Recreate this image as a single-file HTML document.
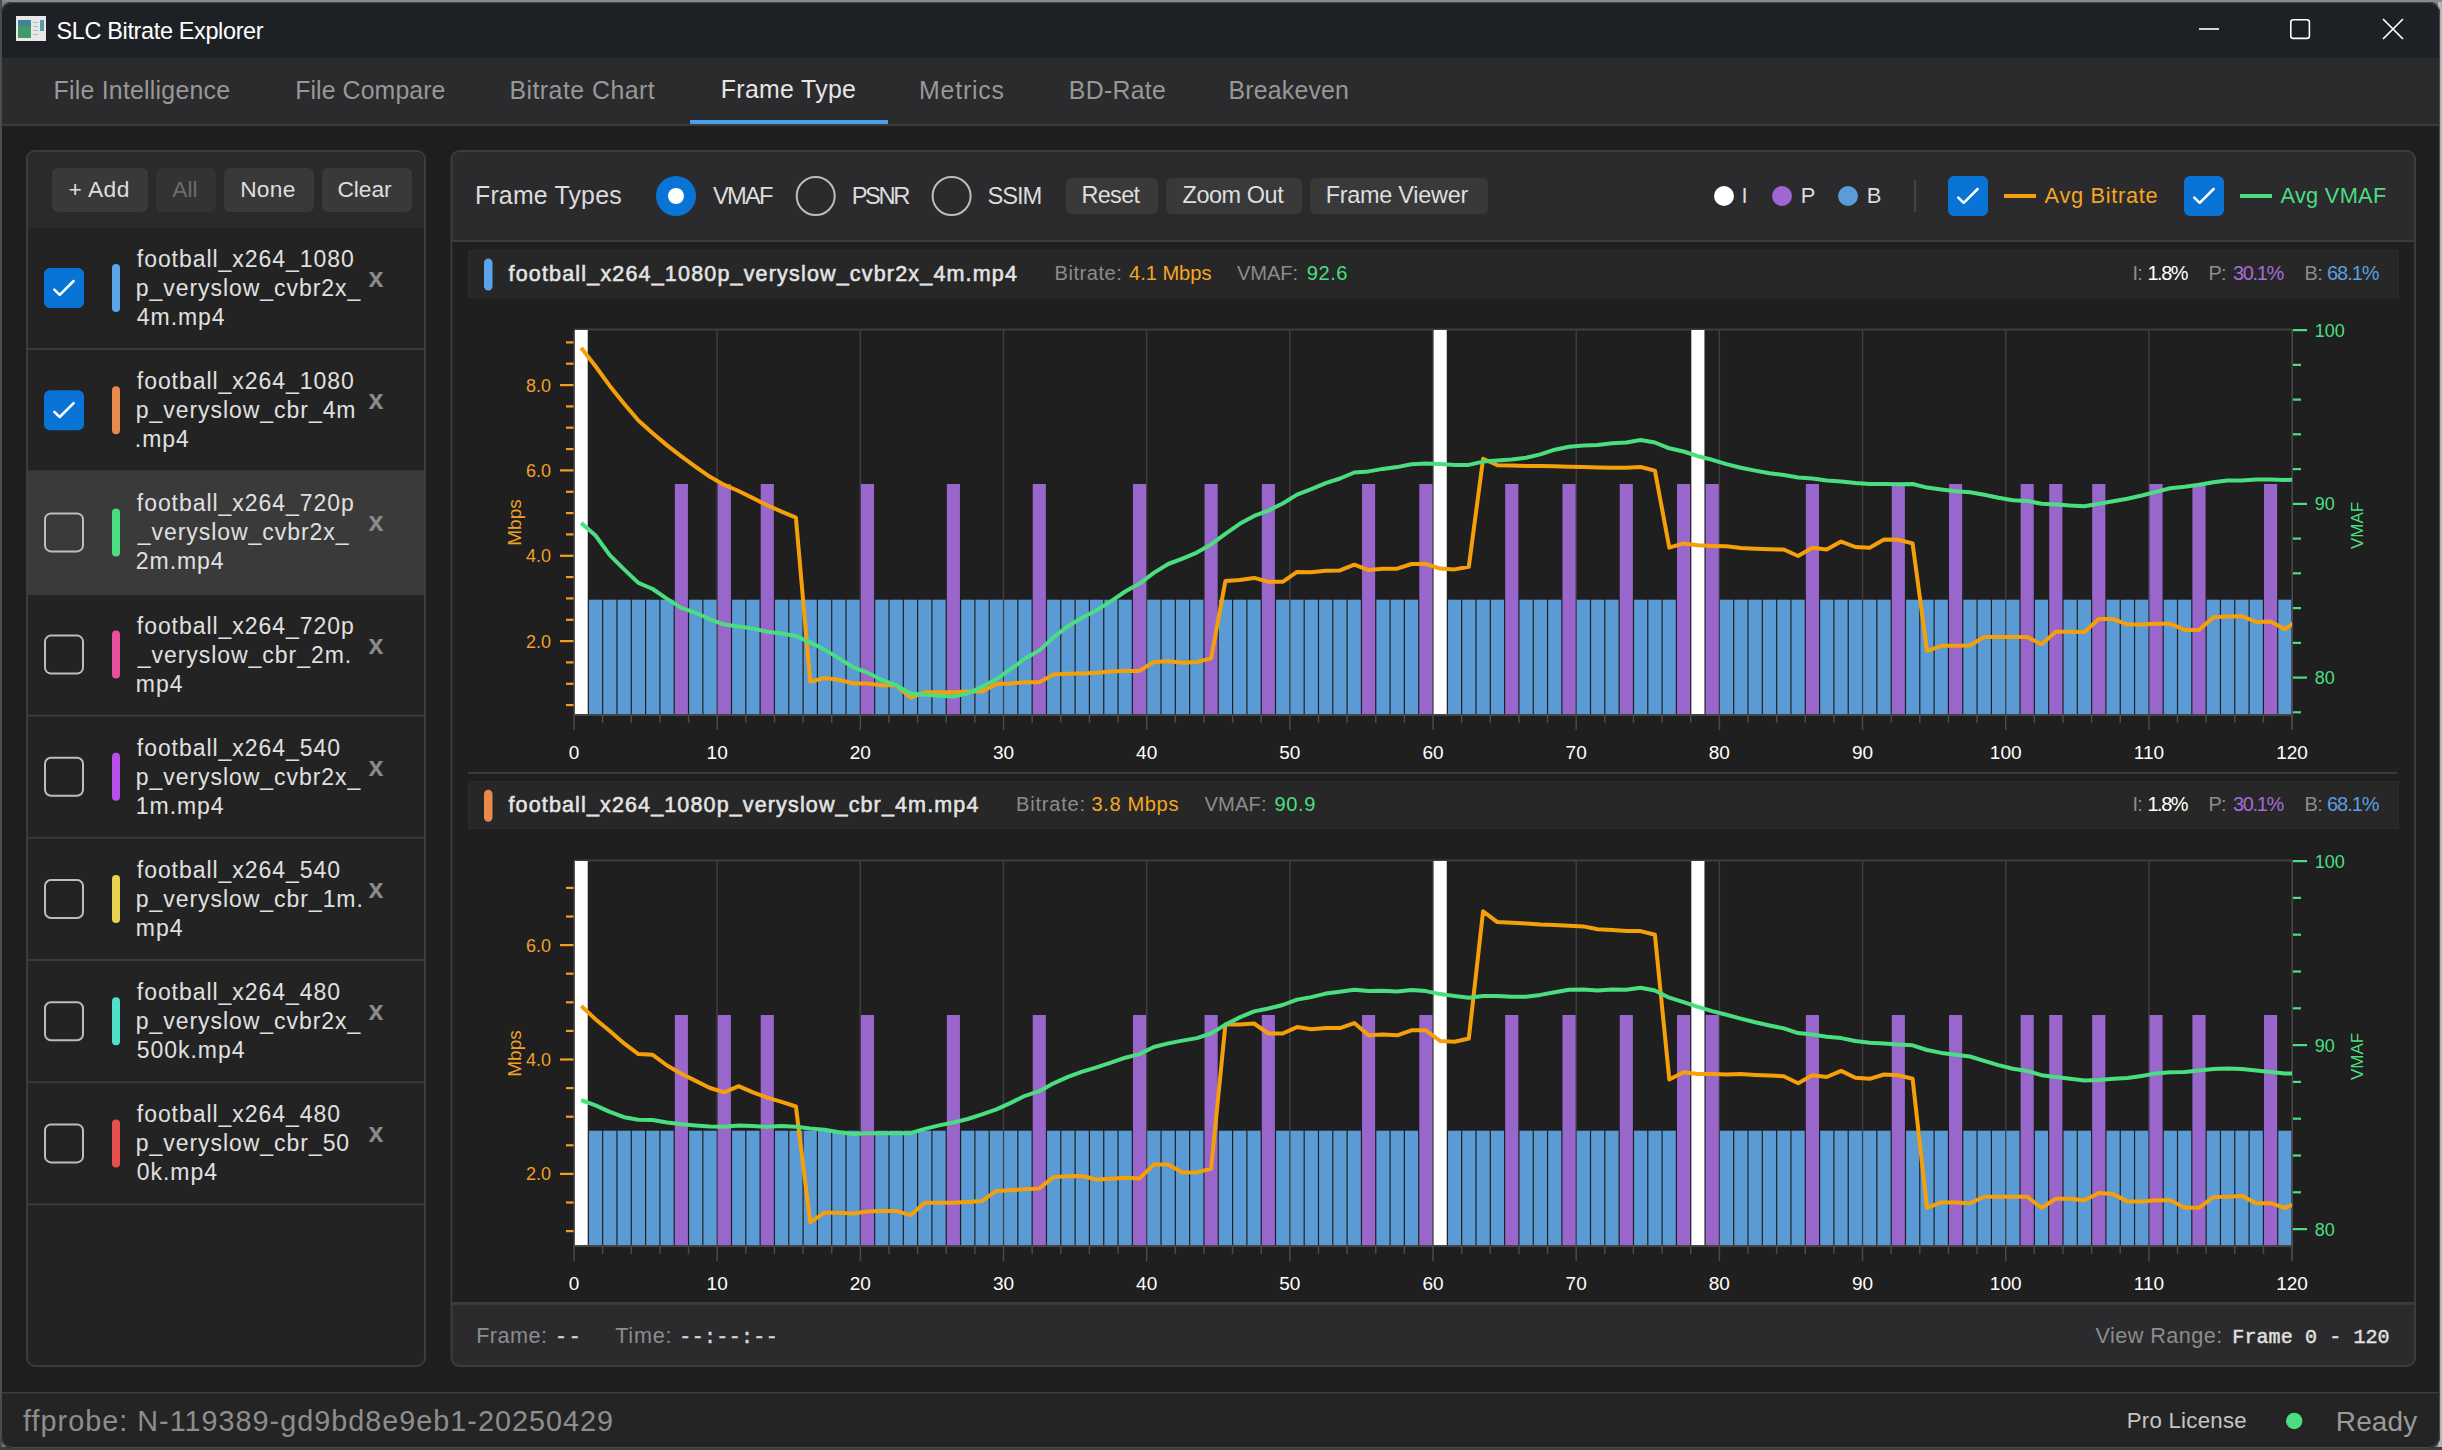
<!DOCTYPE html><html><head><meta charset="utf-8"><title>SLC Bitrate Explorer</title><style>html,body{margin:0;padding:0;background:#9c9c9c;overflow:hidden;width:2442px;height:1450px}svg{display:block}svg{font-family:"Liberation Sans",sans-serif}</style></head><body>
<svg width="2442" height="1450" viewBox="0 0 2442 1450">
<defs><clipPath id="winclip"><rect x="1" y="2" width="2439" height="1446" rx="11"/></clipPath><clipPath id="p1"><rect x="574" y="330" width="1718" height="384"/></clipPath><clipPath id="p2"><rect x="574" y="861" width="1718" height="384"/></clipPath></defs>
<rect x="0" y="0" width="2442" height="1450" fill="#7a7a7a"/><rect x="2438" y="0" width="4" height="1450" fill="#b5b5b5"/><rect x="0" y="0" width="2442" height="2" fill="#8a8a8a"/>
<rect x="0" y="0" width="2" height="1450" fill="#4a4d52"/><rect x="0" y="1447" width="2442" height="3" fill="#3c3c3c"/>
<g clip-path="url(#winclip)">
<rect x="0" y="0" width="2442" height="1450" fill="#1e1e1e"/>
<rect x="0" y="0" width="2442" height="58" fill="#1d2025"/>
<rect x="0" y="58" width="2442" height="67" fill="#2b2b2d"/>
<rect x="0" y="124" width="2442" height="2" fill="#3b3b3b"/>
<rect x="690" y="120" width="198" height="4" fill="#4a9eea"/>
<rect x="0" y="1392.5" width="2442" height="60" fill="#242424"/>
<rect x="0" y="1392" width="2442" height="1.5" fill="#3c3c3c"/>
</g>
<rect x="1.5" y="2.5" width="2438" height="1445" rx="11" fill="none" stroke="#4a4a4a" stroke-width="1"/>
<rect x="16" y="16" width="30" height="25" fill="#e8e8e8"/><rect x="18" y="20" width="13" height="18" fill="#3f9a6a"/><rect x="18" y="20" width="13" height="6" fill="#3d7fa0" opacity="0.8"/><rect x="40" y="20" width="4" height="11" fill="#5a9aa8"/><rect x="33" y="22" width="5" height="1" fill="#bbb"/><rect x="33" y="26" width="5" height="1" fill="#bbb"/><rect x="33" y="30" width="5" height="1" fill="#bbb"/><rect x="33" y="34" width="5" height="1" fill="#bbb"/>
<rect x="2199" y="28.2" width="20" height="1.6" fill="#ffffff"/>
<rect x="2290.8" y="19.8" width="18.6" height="18.6" rx="2.5" fill="none" stroke="#ffffff" stroke-width="1.6"/>
<path d="M2383 19 L2403 39 M2403 19 L2383 39" stroke="#ffffff" stroke-width="1.7" fill="none"/>
<rect x="27" y="151" width="398" height="1215" rx="8" fill="#232323" stroke="#3c3c3c" stroke-width="2"/>
<path d="M28 228 V159 a7 7 0 0 1 7 -7 H417 a7 7 0 0 1 7 7 V228 Z" fill="#2a2a2a"/>
<rect x="52" y="168" width="96" height="44" rx="6" fill="#393939"/>
<rect x="156" y="168" width="60" height="44" rx="6" fill="#333333"/>
<rect x="224" y="168" width="90" height="44" rx="6" fill="#393939"/>
<rect x="322" y="168" width="90" height="44" rx="6" fill="#393939"/>
<rect x="28" y="348.0" width="396" height="2" fill="#3a3a3a"/>
<rect x="44" y="268.0" width="40" height="40" rx="6" fill="#0a74d6"/>
<path d="M54.3 289.6 L59.7 294.8 L73.6 281.0" stroke="#ffffff" stroke-width="2.5" fill="none" stroke-linecap="round" stroke-linejoin="round"/>
<rect x="112" y="264.0" width="8" height="48" rx="4" fill="#5aa5ea"/>
<text x="368.5" y="287.0" font-size="27" font-weight="700" fill="#8a8a8a">x</text>
<rect x="28" y="470.2" width="396" height="2" fill="#3a3a3a"/>
<rect x="44" y="390.2" width="40" height="40" rx="6" fill="#0a74d6"/>
<path d="M54.3 411.8 L59.7 417.0 L73.6 403.2" stroke="#ffffff" stroke-width="2.5" fill="none" stroke-linecap="round" stroke-linejoin="round"/>
<rect x="112" y="386.2" width="8" height="48" rx="4" fill="#e8894e"/>
<text x="368.5" y="409.2" font-size="27" font-weight="700" fill="#8a8a8a">x</text>
<rect x="28" y="471.9" width="396" height="123.0" fill="#3a3a3a"/>
<rect x="28" y="592.4" width="396" height="2" fill="#3a3a3a"/>
<rect x="45" y="513.4" width="38" height="38" rx="6" fill="none" stroke="#bdbdbd" stroke-width="2"/>
<rect x="112" y="508.4" width="8" height="48" rx="4" fill="#4ade80"/>
<text x="368.5" y="531.4" font-size="27" font-weight="700" fill="#8a8a8a">x</text>
<rect x="28" y="714.6" width="396" height="2" fill="#3a3a3a"/>
<rect x="45" y="635.6" width="38" height="38" rx="6" fill="none" stroke="#bdbdbd" stroke-width="2"/>
<rect x="112" y="630.6" width="8" height="48" rx="4" fill="#e84f9c"/>
<text x="368.5" y="653.6" font-size="27" font-weight="700" fill="#8a8a8a">x</text>
<rect x="28" y="836.8" width="396" height="2" fill="#3a3a3a"/>
<rect x="45" y="757.8" width="38" height="38" rx="6" fill="none" stroke="#bdbdbd" stroke-width="2"/>
<rect x="112" y="752.8" width="8" height="48" rx="4" fill="#b84fe8"/>
<text x="368.5" y="775.8" font-size="27" font-weight="700" fill="#8a8a8a">x</text>
<rect x="28" y="959.0" width="396" height="2" fill="#3a3a3a"/>
<rect x="45" y="880.0" width="38" height="38" rx="6" fill="none" stroke="#bdbdbd" stroke-width="2"/>
<rect x="112" y="875.0" width="8" height="48" rx="4" fill="#e8d24f"/>
<text x="368.5" y="898.0" font-size="27" font-weight="700" fill="#8a8a8a">x</text>
<rect x="28" y="1081.2" width="396" height="2" fill="#3a3a3a"/>
<rect x="45" y="1002.2" width="38" height="38" rx="6" fill="none" stroke="#bdbdbd" stroke-width="2"/>
<rect x="112" y="997.2" width="8" height="48" rx="4" fill="#4fe0c8"/>
<text x="368.5" y="1020.2" font-size="27" font-weight="700" fill="#8a8a8a">x</text>
<rect x="28" y="1203.4" width="396" height="2" fill="#3a3a3a"/>
<rect x="45" y="1124.4" width="38" height="38" rx="6" fill="none" stroke="#bdbdbd" stroke-width="2"/>
<rect x="112" y="1119.4" width="8" height="48" rx="4" fill="#e84f4f"/>
<text x="368.5" y="1142.4" font-size="27" font-weight="700" fill="#8a8a8a">x</text>
<rect x="451.5" y="151" width="1963.5" height="1215" rx="8" fill="#2b2b2d" stroke="#3c3c3c" stroke-width="2"/>
<rect x="452.5" y="240" width="1961.5" height="2" fill="#3a3a3a"/>
<rect x="452.5" y="242" width="1961.5" height="1060" fill="#1f1f1f"/>
<rect x="452.5" y="1302" width="1961.5" height="3" fill="#3a3a3a"/>
<circle cx="676" cy="196" r="20" fill="#0a74d6"/><circle cx="676" cy="196" r="8" fill="#ffffff"/>
<circle cx="815.7" cy="196" r="19" fill="none" stroke="#bdbdbd" stroke-width="2"/>
<circle cx="951.6" cy="196" r="19" fill="none" stroke="#bdbdbd" stroke-width="2"/>
<rect x="1066" y="178" width="92" height="36" rx="6" fill="#393939"/>
<rect x="1166" y="178" width="136" height="36" rx="6" fill="#393939"/>
<rect x="1310" y="178" width="178" height="36" rx="6" fill="#393939"/>
<circle cx="1724" cy="196" r="10" fill="#ffffff"/><circle cx="1782" cy="196" r="10" fill="#a066d3"/><circle cx="1848" cy="196" r="10" fill="#5b9bd8"/>
<rect x="1914" y="180" width="2" height="32" fill="#444444"/>
<rect x="1948" y="176" width="40" height="40" rx="6" fill="#0a74d6"/>
<path d="M1958.3 197.6 L1963.7 202.8 L1977.6 189.0" stroke="#ffffff" stroke-width="2.5" fill="none" stroke-linecap="round" stroke-linejoin="round"/>
<rect x="2184" y="176" width="40" height="40" rx="6" fill="#0a74d6"/>
<path d="M2194.3 197.6 L2199.7 202.8 L2213.6 189.0" stroke="#ffffff" stroke-width="2.5" fill="none" stroke-linecap="round" stroke-linejoin="round"/>
<rect x="2004" y="194" width="32" height="4" fill="#f5a00b"/>
<rect x="2240" y="194" width="32" height="4" fill="#4ade80"/>
<rect x="468.5" y="250.5" width="1930" height="47" fill="#272727" stroke="#2b2b2b" stroke-width="1"/>
<rect x="484" y="258.5" width="8.5" height="32" rx="4.2" fill="#5aa5ea"/>
<rect x="468" y="772" width="1929" height="2" fill="#3a3a3a"/>
<rect x="468.5" y="781.5" width="1930" height="47" fill="#272727" stroke="#2b2b2b" stroke-width="1"/>
<rect x="484" y="789.7" width="8.5" height="32" rx="4.2" fill="#e8894e"/>
<rect x="716.42" y="330" width="1.5" height="384" fill="#3e3e3e"/>
<rect x="859.59" y="330" width="1.5" height="384" fill="#3e3e3e"/>
<rect x="1002.76" y="330" width="1.5" height="384" fill="#3e3e3e"/>
<rect x="1145.93" y="330" width="1.5" height="384" fill="#3e3e3e"/>
<rect x="1289.10" y="330" width="1.5" height="384" fill="#3e3e3e"/>
<rect x="1432.27" y="330" width="1.5" height="384" fill="#3e3e3e"/>
<rect x="1575.44" y="330" width="1.5" height="384" fill="#3e3e3e"/>
<rect x="1718.61" y="330" width="1.5" height="384" fill="#3e3e3e"/>
<rect x="1861.78" y="330" width="1.5" height="384" fill="#3e3e3e"/>
<rect x="2004.95" y="330" width="1.5" height="384" fill="#3e3e3e"/>
<rect x="2148.12" y="330" width="1.5" height="384" fill="#3e3e3e"/>
<rect x="574" y="328.5" width="1718" height="2" fill="#3e3e3e"/>
<rect x="574.60" y="330.0" width="13.12" height="384.0" fill="#ffffff"/>
<rect x="588.92" y="599.7" width="13.12" height="114.3" fill="#5b9bd5"/>
<rect x="603.23" y="599.7" width="13.12" height="114.3" fill="#5b9bd5"/>
<rect x="617.55" y="599.7" width="13.12" height="114.3" fill="#5b9bd5"/>
<rect x="631.87" y="599.7" width="13.12" height="114.3" fill="#5b9bd5"/>
<rect x="646.19" y="599.7" width="13.12" height="114.3" fill="#5b9bd5"/>
<rect x="660.50" y="599.7" width="13.12" height="114.3" fill="#5b9bd5"/>
<rect x="674.82" y="484.0" width="13.12" height="230.0" fill="#9966cc"/>
<rect x="689.14" y="599.7" width="13.12" height="114.3" fill="#5b9bd5"/>
<rect x="703.45" y="599.7" width="13.12" height="114.3" fill="#5b9bd5"/>
<rect x="717.77" y="484.0" width="13.12" height="230.0" fill="#9966cc"/>
<rect x="732.09" y="599.7" width="13.12" height="114.3" fill="#5b9bd5"/>
<rect x="746.40" y="599.7" width="13.12" height="114.3" fill="#5b9bd5"/>
<rect x="760.72" y="484.0" width="13.12" height="230.0" fill="#9966cc"/>
<rect x="775.04" y="599.7" width="13.12" height="114.3" fill="#5b9bd5"/>
<rect x="789.36" y="599.7" width="13.12" height="114.3" fill="#5b9bd5"/>
<rect x="803.67" y="599.7" width="13.12" height="114.3" fill="#5b9bd5"/>
<rect x="817.99" y="599.7" width="13.12" height="114.3" fill="#5b9bd5"/>
<rect x="832.31" y="599.7" width="13.12" height="114.3" fill="#5b9bd5"/>
<rect x="846.62" y="599.7" width="13.12" height="114.3" fill="#5b9bd5"/>
<rect x="860.94" y="484.0" width="13.12" height="230.0" fill="#9966cc"/>
<rect x="875.26" y="599.7" width="13.12" height="114.3" fill="#5b9bd5"/>
<rect x="889.57" y="599.7" width="13.12" height="114.3" fill="#5b9bd5"/>
<rect x="903.89" y="599.7" width="13.12" height="114.3" fill="#5b9bd5"/>
<rect x="918.21" y="599.7" width="13.12" height="114.3" fill="#5b9bd5"/>
<rect x="932.52" y="599.7" width="13.12" height="114.3" fill="#5b9bd5"/>
<rect x="946.84" y="484.0" width="13.12" height="230.0" fill="#9966cc"/>
<rect x="961.16" y="599.7" width="13.12" height="114.3" fill="#5b9bd5"/>
<rect x="975.48" y="599.7" width="13.12" height="114.3" fill="#5b9bd5"/>
<rect x="989.79" y="599.7" width="13.12" height="114.3" fill="#5b9bd5"/>
<rect x="1004.11" y="599.7" width="13.12" height="114.3" fill="#5b9bd5"/>
<rect x="1018.43" y="599.7" width="13.12" height="114.3" fill="#5b9bd5"/>
<rect x="1032.74" y="484.0" width="13.12" height="230.0" fill="#9966cc"/>
<rect x="1047.06" y="599.7" width="13.12" height="114.3" fill="#5b9bd5"/>
<rect x="1061.38" y="599.7" width="13.12" height="114.3" fill="#5b9bd5"/>
<rect x="1075.69" y="599.7" width="13.12" height="114.3" fill="#5b9bd5"/>
<rect x="1090.01" y="599.7" width="13.12" height="114.3" fill="#5b9bd5"/>
<rect x="1104.33" y="599.7" width="13.12" height="114.3" fill="#5b9bd5"/>
<rect x="1118.65" y="599.7" width="13.12" height="114.3" fill="#5b9bd5"/>
<rect x="1132.96" y="484.0" width="13.12" height="230.0" fill="#9966cc"/>
<rect x="1147.28" y="599.7" width="13.12" height="114.3" fill="#5b9bd5"/>
<rect x="1161.60" y="599.7" width="13.12" height="114.3" fill="#5b9bd5"/>
<rect x="1175.91" y="599.7" width="13.12" height="114.3" fill="#5b9bd5"/>
<rect x="1190.23" y="599.7" width="13.12" height="114.3" fill="#5b9bd5"/>
<rect x="1204.55" y="484.0" width="13.12" height="230.0" fill="#9966cc"/>
<rect x="1218.86" y="599.7" width="13.12" height="114.3" fill="#5b9bd5"/>
<rect x="1233.18" y="599.7" width="13.12" height="114.3" fill="#5b9bd5"/>
<rect x="1247.50" y="599.7" width="13.12" height="114.3" fill="#5b9bd5"/>
<rect x="1261.82" y="484.0" width="13.12" height="230.0" fill="#9966cc"/>
<rect x="1276.13" y="599.7" width="13.12" height="114.3" fill="#5b9bd5"/>
<rect x="1290.45" y="599.7" width="13.12" height="114.3" fill="#5b9bd5"/>
<rect x="1304.77" y="599.7" width="13.12" height="114.3" fill="#5b9bd5"/>
<rect x="1319.08" y="599.7" width="13.12" height="114.3" fill="#5b9bd5"/>
<rect x="1333.40" y="599.7" width="13.12" height="114.3" fill="#5b9bd5"/>
<rect x="1347.72" y="599.7" width="13.12" height="114.3" fill="#5b9bd5"/>
<rect x="1362.03" y="484.0" width="13.12" height="230.0" fill="#9966cc"/>
<rect x="1376.35" y="599.7" width="13.12" height="114.3" fill="#5b9bd5"/>
<rect x="1390.67" y="599.7" width="13.12" height="114.3" fill="#5b9bd5"/>
<rect x="1404.99" y="599.7" width="13.12" height="114.3" fill="#5b9bd5"/>
<rect x="1419.30" y="484.0" width="13.12" height="230.0" fill="#9966cc"/>
<rect x="1433.62" y="330.0" width="13.12" height="384.0" fill="#ffffff"/>
<rect x="1447.94" y="599.7" width="13.12" height="114.3" fill="#5b9bd5"/>
<rect x="1462.25" y="599.7" width="13.12" height="114.3" fill="#5b9bd5"/>
<rect x="1476.57" y="599.7" width="13.12" height="114.3" fill="#5b9bd5"/>
<rect x="1490.89" y="599.7" width="13.12" height="114.3" fill="#5b9bd5"/>
<rect x="1505.20" y="484.0" width="13.12" height="230.0" fill="#9966cc"/>
<rect x="1519.52" y="599.7" width="13.12" height="114.3" fill="#5b9bd5"/>
<rect x="1533.84" y="599.7" width="13.12" height="114.3" fill="#5b9bd5"/>
<rect x="1548.16" y="599.7" width="13.12" height="114.3" fill="#5b9bd5"/>
<rect x="1562.47" y="484.0" width="13.12" height="230.0" fill="#9966cc"/>
<rect x="1576.79" y="599.7" width="13.12" height="114.3" fill="#5b9bd5"/>
<rect x="1591.11" y="599.7" width="13.12" height="114.3" fill="#5b9bd5"/>
<rect x="1605.42" y="599.7" width="13.12" height="114.3" fill="#5b9bd5"/>
<rect x="1619.74" y="484.0" width="13.12" height="230.0" fill="#9966cc"/>
<rect x="1634.06" y="599.7" width="13.12" height="114.3" fill="#5b9bd5"/>
<rect x="1648.38" y="599.7" width="13.12" height="114.3" fill="#5b9bd5"/>
<rect x="1662.69" y="599.7" width="13.12" height="114.3" fill="#5b9bd5"/>
<rect x="1677.01" y="484.0" width="13.12" height="230.0" fill="#9966cc"/>
<rect x="1691.33" y="330.0" width="13.12" height="384.0" fill="#ffffff"/>
<rect x="1705.64" y="484.0" width="13.12" height="230.0" fill="#9966cc"/>
<rect x="1719.96" y="599.7" width="13.12" height="114.3" fill="#5b9bd5"/>
<rect x="1734.28" y="599.7" width="13.12" height="114.3" fill="#5b9bd5"/>
<rect x="1748.59" y="599.7" width="13.12" height="114.3" fill="#5b9bd5"/>
<rect x="1762.91" y="599.7" width="13.12" height="114.3" fill="#5b9bd5"/>
<rect x="1777.23" y="599.7" width="13.12" height="114.3" fill="#5b9bd5"/>
<rect x="1791.54" y="599.7" width="13.12" height="114.3" fill="#5b9bd5"/>
<rect x="1805.86" y="484.0" width="13.12" height="230.0" fill="#9966cc"/>
<rect x="1820.18" y="599.7" width="13.12" height="114.3" fill="#5b9bd5"/>
<rect x="1834.50" y="599.7" width="13.12" height="114.3" fill="#5b9bd5"/>
<rect x="1848.81" y="599.7" width="13.12" height="114.3" fill="#5b9bd5"/>
<rect x="1863.13" y="599.7" width="13.12" height="114.3" fill="#5b9bd5"/>
<rect x="1877.45" y="599.7" width="13.12" height="114.3" fill="#5b9bd5"/>
<rect x="1891.76" y="484.0" width="13.12" height="230.0" fill="#9966cc"/>
<rect x="1906.08" y="599.7" width="13.12" height="114.3" fill="#5b9bd5"/>
<rect x="1920.40" y="599.7" width="13.12" height="114.3" fill="#5b9bd5"/>
<rect x="1934.71" y="599.7" width="13.12" height="114.3" fill="#5b9bd5"/>
<rect x="1949.03" y="484.0" width="13.12" height="230.0" fill="#9966cc"/>
<rect x="1963.35" y="599.7" width="13.12" height="114.3" fill="#5b9bd5"/>
<rect x="1977.67" y="599.7" width="13.12" height="114.3" fill="#5b9bd5"/>
<rect x="1991.98" y="599.7" width="13.12" height="114.3" fill="#5b9bd5"/>
<rect x="2006.30" y="599.7" width="13.12" height="114.3" fill="#5b9bd5"/>
<rect x="2020.62" y="484.0" width="13.12" height="230.0" fill="#9966cc"/>
<rect x="2034.93" y="599.7" width="13.12" height="114.3" fill="#5b9bd5"/>
<rect x="2049.25" y="484.0" width="13.12" height="230.0" fill="#9966cc"/>
<rect x="2063.57" y="599.7" width="13.12" height="114.3" fill="#5b9bd5"/>
<rect x="2077.88" y="599.7" width="13.12" height="114.3" fill="#5b9bd5"/>
<rect x="2092.20" y="484.0" width="13.12" height="230.0" fill="#9966cc"/>
<rect x="2106.52" y="599.7" width="13.12" height="114.3" fill="#5b9bd5"/>
<rect x="2120.84" y="599.7" width="13.12" height="114.3" fill="#5b9bd5"/>
<rect x="2135.15" y="599.7" width="13.12" height="114.3" fill="#5b9bd5"/>
<rect x="2149.47" y="484.0" width="13.12" height="230.0" fill="#9966cc"/>
<rect x="2163.79" y="599.7" width="13.12" height="114.3" fill="#5b9bd5"/>
<rect x="2178.10" y="599.7" width="13.12" height="114.3" fill="#5b9bd5"/>
<rect x="2192.42" y="484.0" width="13.12" height="230.0" fill="#9966cc"/>
<rect x="2206.74" y="599.7" width="13.12" height="114.3" fill="#5b9bd5"/>
<rect x="2221.05" y="599.7" width="13.12" height="114.3" fill="#5b9bd5"/>
<rect x="2235.37" y="599.7" width="13.12" height="114.3" fill="#5b9bd5"/>
<rect x="2249.69" y="599.7" width="13.12" height="114.3" fill="#5b9bd5"/>
<rect x="2264.01" y="484.0" width="13.12" height="230.0" fill="#9966cc"/>
<rect x="2278.32" y="599.7" width="13.12" height="114.3" fill="#5b9bd5"/>
<rect x="573.5" y="330" width="1.2" height="384" fill="#444"/>
<rect x="2291.5" y="329" width="1.5" height="400" fill="#4a4a4a"/>
<rect x="573" y="714" width="1720" height="2" fill="#444"/>
<rect x="573.25" y="715" width="1.5" height="15" fill="#4a4a4a"/>
<rect x="601.88" y="715" width="1.5" height="8" fill="#4a4a4a"/>
<rect x="630.52" y="715" width="1.5" height="8" fill="#4a4a4a"/>
<rect x="659.15" y="715" width="1.5" height="8" fill="#4a4a4a"/>
<rect x="687.79" y="715" width="1.5" height="8" fill="#4a4a4a"/>
<rect x="716.42" y="715" width="1.5" height="15" fill="#4a4a4a"/>
<rect x="745.05" y="715" width="1.5" height="8" fill="#4a4a4a"/>
<rect x="773.69" y="715" width="1.5" height="8" fill="#4a4a4a"/>
<rect x="802.32" y="715" width="1.5" height="8" fill="#4a4a4a"/>
<rect x="830.96" y="715" width="1.5" height="8" fill="#4a4a4a"/>
<rect x="859.59" y="715" width="1.5" height="15" fill="#4a4a4a"/>
<rect x="888.22" y="715" width="1.5" height="8" fill="#4a4a4a"/>
<rect x="916.86" y="715" width="1.5" height="8" fill="#4a4a4a"/>
<rect x="945.49" y="715" width="1.5" height="8" fill="#4a4a4a"/>
<rect x="974.13" y="715" width="1.5" height="8" fill="#4a4a4a"/>
<rect x="1002.76" y="715" width="1.5" height="15" fill="#4a4a4a"/>
<rect x="1031.39" y="715" width="1.5" height="8" fill="#4a4a4a"/>
<rect x="1060.03" y="715" width="1.5" height="8" fill="#4a4a4a"/>
<rect x="1088.66" y="715" width="1.5" height="8" fill="#4a4a4a"/>
<rect x="1117.30" y="715" width="1.5" height="8" fill="#4a4a4a"/>
<rect x="1145.93" y="715" width="1.5" height="15" fill="#4a4a4a"/>
<rect x="1174.56" y="715" width="1.5" height="8" fill="#4a4a4a"/>
<rect x="1203.20" y="715" width="1.5" height="8" fill="#4a4a4a"/>
<rect x="1231.83" y="715" width="1.5" height="8" fill="#4a4a4a"/>
<rect x="1260.47" y="715" width="1.5" height="8" fill="#4a4a4a"/>
<rect x="1289.10" y="715" width="1.5" height="15" fill="#4a4a4a"/>
<rect x="1317.73" y="715" width="1.5" height="8" fill="#4a4a4a"/>
<rect x="1346.37" y="715" width="1.5" height="8" fill="#4a4a4a"/>
<rect x="1375.00" y="715" width="1.5" height="8" fill="#4a4a4a"/>
<rect x="1403.64" y="715" width="1.5" height="8" fill="#4a4a4a"/>
<rect x="1432.27" y="715" width="1.5" height="15" fill="#4a4a4a"/>
<rect x="1460.90" y="715" width="1.5" height="8" fill="#4a4a4a"/>
<rect x="1489.54" y="715" width="1.5" height="8" fill="#4a4a4a"/>
<rect x="1518.17" y="715" width="1.5" height="8" fill="#4a4a4a"/>
<rect x="1546.81" y="715" width="1.5" height="8" fill="#4a4a4a"/>
<rect x="1575.44" y="715" width="1.5" height="15" fill="#4a4a4a"/>
<rect x="1604.07" y="715" width="1.5" height="8" fill="#4a4a4a"/>
<rect x="1632.71" y="715" width="1.5" height="8" fill="#4a4a4a"/>
<rect x="1661.34" y="715" width="1.5" height="8" fill="#4a4a4a"/>
<rect x="1689.98" y="715" width="1.5" height="8" fill="#4a4a4a"/>
<rect x="1718.61" y="715" width="1.5" height="15" fill="#4a4a4a"/>
<rect x="1747.24" y="715" width="1.5" height="8" fill="#4a4a4a"/>
<rect x="1775.88" y="715" width="1.5" height="8" fill="#4a4a4a"/>
<rect x="1804.51" y="715" width="1.5" height="8" fill="#4a4a4a"/>
<rect x="1833.15" y="715" width="1.5" height="8" fill="#4a4a4a"/>
<rect x="1861.78" y="715" width="1.5" height="15" fill="#4a4a4a"/>
<rect x="1890.41" y="715" width="1.5" height="8" fill="#4a4a4a"/>
<rect x="1919.05" y="715" width="1.5" height="8" fill="#4a4a4a"/>
<rect x="1947.68" y="715" width="1.5" height="8" fill="#4a4a4a"/>
<rect x="1976.32" y="715" width="1.5" height="8" fill="#4a4a4a"/>
<rect x="2004.95" y="715" width="1.5" height="15" fill="#4a4a4a"/>
<rect x="2033.58" y="715" width="1.5" height="8" fill="#4a4a4a"/>
<rect x="2062.22" y="715" width="1.5" height="8" fill="#4a4a4a"/>
<rect x="2090.85" y="715" width="1.5" height="8" fill="#4a4a4a"/>
<rect x="2119.49" y="715" width="1.5" height="8" fill="#4a4a4a"/>
<rect x="2148.12" y="715" width="1.5" height="15" fill="#4a4a4a"/>
<rect x="2176.75" y="715" width="1.5" height="8" fill="#4a4a4a"/>
<rect x="2205.39" y="715" width="1.5" height="8" fill="#4a4a4a"/>
<rect x="2234.02" y="715" width="1.5" height="8" fill="#4a4a4a"/>
<rect x="2262.66" y="715" width="1.5" height="8" fill="#4a4a4a"/>
<rect x="2291.29" y="715" width="1.5" height="15" fill="#4a4a4a"/>
<rect x="566" y="704.0" width="7.5" height="2.2" fill="#f0a028"/>
<rect x="566" y="682.7" width="7.5" height="2.2" fill="#f0a028"/>
<rect x="566" y="661.3" width="7.5" height="2.2" fill="#f0a028"/>
<rect x="560" y="640.0" width="13.5" height="2.2" fill="#f0a028"/>
<rect x="566" y="618.7" width="7.5" height="2.2" fill="#f0a028"/>
<rect x="566" y="597.3" width="7.5" height="2.2" fill="#f0a028"/>
<rect x="566" y="576.0" width="7.5" height="2.2" fill="#f0a028"/>
<rect x="560" y="554.7" width="13.5" height="2.2" fill="#f0a028"/>
<rect x="566" y="533.3" width="7.5" height="2.2" fill="#f0a028"/>
<rect x="566" y="512.0" width="7.5" height="2.2" fill="#f0a028"/>
<rect x="566" y="490.7" width="7.5" height="2.2" fill="#f0a028"/>
<rect x="560" y="469.3" width="13.5" height="2.2" fill="#f0a028"/>
<rect x="566" y="448.0" width="7.5" height="2.2" fill="#f0a028"/>
<rect x="566" y="426.6" width="7.5" height="2.2" fill="#f0a028"/>
<rect x="566" y="405.3" width="7.5" height="2.2" fill="#f0a028"/>
<rect x="560" y="384.0" width="13.5" height="2.2" fill="#f0a028"/>
<rect x="566" y="362.6" width="7.5" height="2.2" fill="#f0a028"/>
<rect x="566" y="341.3" width="7.5" height="2.2" fill="#f0a028"/>
<rect x="2293" y="711.2" width="8" height="2.2" fill="#4ade80"/>
<rect x="2293" y="676.5" width="14" height="2.2" fill="#4ade80"/>
<rect x="2293" y="641.8" width="8" height="2.2" fill="#4ade80"/>
<rect x="2293" y="607.0" width="8" height="2.2" fill="#4ade80"/>
<rect x="2293" y="572.2" width="8" height="2.2" fill="#4ade80"/>
<rect x="2293" y="537.5" width="8" height="2.2" fill="#4ade80"/>
<rect x="2293" y="502.8" width="14" height="2.2" fill="#4ade80"/>
<rect x="2293" y="468.0" width="8" height="2.2" fill="#4ade80"/>
<rect x="2293" y="433.2" width="8" height="2.2" fill="#4ade80"/>
<rect x="2293" y="398.5" width="8" height="2.2" fill="#4ade80"/>
<rect x="2293" y="363.8" width="8" height="2.2" fill="#4ade80"/>
<rect x="2293" y="329.0" width="14" height="2.2" fill="#4ade80"/>
<g clip-path="url(#p1)">
<polyline points="581.2,347.8 595.5,366.3 609.8,385.9 624.1,403.7 638.4,420.5 652.7,433.3 667.1,445.4 681.4,456.4 695.7,466.8 710.0,476.8 724.3,484.9 738.6,491.0 753.0,498.1 767.3,505.3 781.6,511.7 795.9,517.7 810.2,681.6 824.5,678.0 838.9,679.8 853.2,683.4 867.5,683.4 881.8,685.2 896.1,685.2 910.5,697.6 924.8,692.3 939.1,692.3 953.4,692.3 967.7,691.6 982.0,691.6 996.4,684.1 1010.7,683.4 1025.0,682.3 1039.3,682.3 1053.6,674.5 1067.9,673.8 1082.3,673.4 1096.6,672.7 1110.9,671.6 1125.2,670.9 1139.5,670.9 1153.8,662.0 1168.2,661.3 1182.5,662.7 1196.8,662.0 1211.1,658.4 1225.4,581.1 1239.7,580.1 1254.1,577.9 1268.4,581.8 1282.7,581.8 1297.0,571.9 1311.3,572.2 1325.6,570.8 1340.0,570.4 1354.3,564.7 1368.6,570.1 1382.9,568.7 1397.2,568.7 1411.5,564.0 1425.9,564.0 1440.2,568.6 1454.5,569.4 1468.8,566.8 1483.1,458.7 1497.4,465.2 1511.8,465.6 1526.1,465.9 1540.4,465.9 1554.7,466.3 1569.0,466.7 1583.4,467.0 1597.7,467.4 1612.0,467.7 1626.3,467.7 1640.6,467.0 1654.9,470.6 1669.3,547.7 1683.6,543.4 1697.9,545.2 1712.2,545.9 1726.5,546.3 1740.8,548.1 1755.2,548.8 1769.5,549.2 1783.8,549.5 1798.1,556.0 1812.4,547.7 1826.7,549.5 1841.1,541.6 1855.4,547.0 1869.7,547.7 1884.0,539.5 1898.3,539.8 1912.6,543.4 1927.0,650.8 1941.3,645.8 1955.6,645.8 1969.9,645.4 1984.2,637.1 1998.5,637.1 2012.9,637.1 2027.2,637.1 2041.5,644.3 2055.8,631.7 2070.1,631.7 2084.4,632.1 2098.8,619.1 2113.1,619.1 2127.4,624.5 2141.7,624.5 2156.0,623.8 2170.3,623.8 2184.7,629.9 2199.0,629.9 2213.3,617.3 2227.6,616.6 2241.9,616.2 2256.2,622.0 2270.6,621.6 2284.9,629.2 2299.2,619.1" fill="none" stroke="#f5a00b" stroke-width="4" stroke-linejoin="round"/>
<polyline points="581.2,523.1 595.5,535.5 609.8,555.1 624.1,569.4 638.4,582.9 652.7,589.0 667.1,598.9 681.4,607.9 695.7,612.8 710.0,619.3 724.3,624.6 738.6,626.4 753.0,628.5 767.3,631.7 781.6,633.5 795.9,636.0 810.2,642.4 824.5,649.5 838.9,658.4 853.2,667.3 867.5,672.7 881.8,679.8 896.1,685.2 910.5,693.4 924.8,694.8 939.1,695.8 953.4,696.6 967.7,693.4 982.0,686.9 996.4,679.1 1010.7,669.1 1025.0,658.4 1039.3,650.6 1053.6,637.1 1067.9,626.4 1082.3,617.5 1096.6,610.3 1110.9,601.4 1125.2,591.5 1139.5,583.6 1153.8,572.9 1168.2,564.0 1182.5,558.7 1196.8,552.6 1211.1,544.4 1225.4,533.8 1239.7,523.8 1254.1,515.9 1268.4,510.6 1282.7,503.5 1297.0,494.6 1311.3,489.2 1325.6,483.2 1340.0,478.5 1354.3,472.5 1368.6,471.4 1382.9,468.9 1397.2,467.1 1411.5,464.3 1425.9,463.6 1440.2,464.1 1454.5,464.9 1468.8,464.9 1483.1,461.6 1497.4,460.5 1511.8,459.5 1526.1,457.7 1540.4,454.4 1554.7,449.7 1569.0,446.8 1583.4,445.4 1597.7,445.0 1612.0,443.2 1626.3,442.5 1640.6,440.0 1654.9,442.5 1669.3,448.3 1683.6,451.5 1697.9,456.2 1712.2,459.8 1726.5,464.1 1740.8,467.7 1755.2,470.6 1769.5,473.2 1783.8,475.0 1798.1,477.5 1812.4,478.6 1826.7,480.4 1841.1,481.4 1855.4,482.9 1869.7,484.0 1884.0,484.0 1898.3,484.3 1912.6,484.0 1927.0,487.6 1941.3,489.4 1955.6,491.2 1969.9,492.3 1984.2,494.8 1998.5,497.7 2012.9,500.2 2027.2,500.9 2041.5,503.8 2055.8,504.5 2070.1,505.6 2084.4,506.3 2098.8,503.8 2113.1,501.3 2127.4,498.7 2141.7,495.5 2156.0,491.9 2170.3,488.3 2184.7,486.8 2199.0,484.7 2213.3,482.2 2227.6,480.4 2241.9,480.4 2256.2,479.6 2270.6,479.6 2284.9,480.0 2299.2,479.3" fill="none" stroke="#4ade80" stroke-width="4" stroke-linejoin="round"/>
</g>
<text x="0" y="0" transform="translate(520.5,522.5) rotate(-90)" text-anchor="middle" font-size="19" fill="#f0a028">Mbps</text>
<text x="0" y="0" transform="translate(2363,525.5) rotate(-90)" text-anchor="middle" font-size="17" fill="#4ade80">VMAF</text>
<rect x="716.42" y="861" width="1.5" height="384" fill="#3e3e3e"/>
<rect x="859.59" y="861" width="1.5" height="384" fill="#3e3e3e"/>
<rect x="1002.76" y="861" width="1.5" height="384" fill="#3e3e3e"/>
<rect x="1145.93" y="861" width="1.5" height="384" fill="#3e3e3e"/>
<rect x="1289.10" y="861" width="1.5" height="384" fill="#3e3e3e"/>
<rect x="1432.27" y="861" width="1.5" height="384" fill="#3e3e3e"/>
<rect x="1575.44" y="861" width="1.5" height="384" fill="#3e3e3e"/>
<rect x="1718.61" y="861" width="1.5" height="384" fill="#3e3e3e"/>
<rect x="1861.78" y="861" width="1.5" height="384" fill="#3e3e3e"/>
<rect x="2004.95" y="861" width="1.5" height="384" fill="#3e3e3e"/>
<rect x="2148.12" y="861" width="1.5" height="384" fill="#3e3e3e"/>
<rect x="574" y="859.5" width="1718" height="2" fill="#3e3e3e"/>
<rect x="574.60" y="861.0" width="13.12" height="384.0" fill="#ffffff"/>
<rect x="588.92" y="1130.7" width="13.12" height="114.3" fill="#5b9bd5"/>
<rect x="603.23" y="1130.7" width="13.12" height="114.3" fill="#5b9bd5"/>
<rect x="617.55" y="1130.7" width="13.12" height="114.3" fill="#5b9bd5"/>
<rect x="631.87" y="1130.7" width="13.12" height="114.3" fill="#5b9bd5"/>
<rect x="646.19" y="1130.7" width="13.12" height="114.3" fill="#5b9bd5"/>
<rect x="660.50" y="1130.7" width="13.12" height="114.3" fill="#5b9bd5"/>
<rect x="674.82" y="1015.0" width="13.12" height="230.0" fill="#9966cc"/>
<rect x="689.14" y="1130.7" width="13.12" height="114.3" fill="#5b9bd5"/>
<rect x="703.45" y="1130.7" width="13.12" height="114.3" fill="#5b9bd5"/>
<rect x="717.77" y="1015.0" width="13.12" height="230.0" fill="#9966cc"/>
<rect x="732.09" y="1130.7" width="13.12" height="114.3" fill="#5b9bd5"/>
<rect x="746.40" y="1130.7" width="13.12" height="114.3" fill="#5b9bd5"/>
<rect x="760.72" y="1015.0" width="13.12" height="230.0" fill="#9966cc"/>
<rect x="775.04" y="1130.7" width="13.12" height="114.3" fill="#5b9bd5"/>
<rect x="789.36" y="1130.7" width="13.12" height="114.3" fill="#5b9bd5"/>
<rect x="803.67" y="1130.7" width="13.12" height="114.3" fill="#5b9bd5"/>
<rect x="817.99" y="1130.7" width="13.12" height="114.3" fill="#5b9bd5"/>
<rect x="832.31" y="1130.7" width="13.12" height="114.3" fill="#5b9bd5"/>
<rect x="846.62" y="1130.7" width="13.12" height="114.3" fill="#5b9bd5"/>
<rect x="860.94" y="1015.0" width="13.12" height="230.0" fill="#9966cc"/>
<rect x="875.26" y="1130.7" width="13.12" height="114.3" fill="#5b9bd5"/>
<rect x="889.57" y="1130.7" width="13.12" height="114.3" fill="#5b9bd5"/>
<rect x="903.89" y="1130.7" width="13.12" height="114.3" fill="#5b9bd5"/>
<rect x="918.21" y="1130.7" width="13.12" height="114.3" fill="#5b9bd5"/>
<rect x="932.52" y="1130.7" width="13.12" height="114.3" fill="#5b9bd5"/>
<rect x="946.84" y="1015.0" width="13.12" height="230.0" fill="#9966cc"/>
<rect x="961.16" y="1130.7" width="13.12" height="114.3" fill="#5b9bd5"/>
<rect x="975.48" y="1130.7" width="13.12" height="114.3" fill="#5b9bd5"/>
<rect x="989.79" y="1130.7" width="13.12" height="114.3" fill="#5b9bd5"/>
<rect x="1004.11" y="1130.7" width="13.12" height="114.3" fill="#5b9bd5"/>
<rect x="1018.43" y="1130.7" width="13.12" height="114.3" fill="#5b9bd5"/>
<rect x="1032.74" y="1015.0" width="13.12" height="230.0" fill="#9966cc"/>
<rect x="1047.06" y="1130.7" width="13.12" height="114.3" fill="#5b9bd5"/>
<rect x="1061.38" y="1130.7" width="13.12" height="114.3" fill="#5b9bd5"/>
<rect x="1075.69" y="1130.7" width="13.12" height="114.3" fill="#5b9bd5"/>
<rect x="1090.01" y="1130.7" width="13.12" height="114.3" fill="#5b9bd5"/>
<rect x="1104.33" y="1130.7" width="13.12" height="114.3" fill="#5b9bd5"/>
<rect x="1118.65" y="1130.7" width="13.12" height="114.3" fill="#5b9bd5"/>
<rect x="1132.96" y="1015.0" width="13.12" height="230.0" fill="#9966cc"/>
<rect x="1147.28" y="1130.7" width="13.12" height="114.3" fill="#5b9bd5"/>
<rect x="1161.60" y="1130.7" width="13.12" height="114.3" fill="#5b9bd5"/>
<rect x="1175.91" y="1130.7" width="13.12" height="114.3" fill="#5b9bd5"/>
<rect x="1190.23" y="1130.7" width="13.12" height="114.3" fill="#5b9bd5"/>
<rect x="1204.55" y="1015.0" width="13.12" height="230.0" fill="#9966cc"/>
<rect x="1218.86" y="1130.7" width="13.12" height="114.3" fill="#5b9bd5"/>
<rect x="1233.18" y="1130.7" width="13.12" height="114.3" fill="#5b9bd5"/>
<rect x="1247.50" y="1130.7" width="13.12" height="114.3" fill="#5b9bd5"/>
<rect x="1261.82" y="1015.0" width="13.12" height="230.0" fill="#9966cc"/>
<rect x="1276.13" y="1130.7" width="13.12" height="114.3" fill="#5b9bd5"/>
<rect x="1290.45" y="1130.7" width="13.12" height="114.3" fill="#5b9bd5"/>
<rect x="1304.77" y="1130.7" width="13.12" height="114.3" fill="#5b9bd5"/>
<rect x="1319.08" y="1130.7" width="13.12" height="114.3" fill="#5b9bd5"/>
<rect x="1333.40" y="1130.7" width="13.12" height="114.3" fill="#5b9bd5"/>
<rect x="1347.72" y="1130.7" width="13.12" height="114.3" fill="#5b9bd5"/>
<rect x="1362.03" y="1015.0" width="13.12" height="230.0" fill="#9966cc"/>
<rect x="1376.35" y="1130.7" width="13.12" height="114.3" fill="#5b9bd5"/>
<rect x="1390.67" y="1130.7" width="13.12" height="114.3" fill="#5b9bd5"/>
<rect x="1404.99" y="1130.7" width="13.12" height="114.3" fill="#5b9bd5"/>
<rect x="1419.30" y="1015.0" width="13.12" height="230.0" fill="#9966cc"/>
<rect x="1433.62" y="861.0" width="13.12" height="384.0" fill="#ffffff"/>
<rect x="1447.94" y="1130.7" width="13.12" height="114.3" fill="#5b9bd5"/>
<rect x="1462.25" y="1130.7" width="13.12" height="114.3" fill="#5b9bd5"/>
<rect x="1476.57" y="1130.7" width="13.12" height="114.3" fill="#5b9bd5"/>
<rect x="1490.89" y="1130.7" width="13.12" height="114.3" fill="#5b9bd5"/>
<rect x="1505.20" y="1015.0" width="13.12" height="230.0" fill="#9966cc"/>
<rect x="1519.52" y="1130.7" width="13.12" height="114.3" fill="#5b9bd5"/>
<rect x="1533.84" y="1130.7" width="13.12" height="114.3" fill="#5b9bd5"/>
<rect x="1548.16" y="1130.7" width="13.12" height="114.3" fill="#5b9bd5"/>
<rect x="1562.47" y="1015.0" width="13.12" height="230.0" fill="#9966cc"/>
<rect x="1576.79" y="1130.7" width="13.12" height="114.3" fill="#5b9bd5"/>
<rect x="1591.11" y="1130.7" width="13.12" height="114.3" fill="#5b9bd5"/>
<rect x="1605.42" y="1130.7" width="13.12" height="114.3" fill="#5b9bd5"/>
<rect x="1619.74" y="1015.0" width="13.12" height="230.0" fill="#9966cc"/>
<rect x="1634.06" y="1130.7" width="13.12" height="114.3" fill="#5b9bd5"/>
<rect x="1648.38" y="1130.7" width="13.12" height="114.3" fill="#5b9bd5"/>
<rect x="1662.69" y="1130.7" width="13.12" height="114.3" fill="#5b9bd5"/>
<rect x="1677.01" y="1015.0" width="13.12" height="230.0" fill="#9966cc"/>
<rect x="1691.33" y="861.0" width="13.12" height="384.0" fill="#ffffff"/>
<rect x="1705.64" y="1015.0" width="13.12" height="230.0" fill="#9966cc"/>
<rect x="1719.96" y="1130.7" width="13.12" height="114.3" fill="#5b9bd5"/>
<rect x="1734.28" y="1130.7" width="13.12" height="114.3" fill="#5b9bd5"/>
<rect x="1748.59" y="1130.7" width="13.12" height="114.3" fill="#5b9bd5"/>
<rect x="1762.91" y="1130.7" width="13.12" height="114.3" fill="#5b9bd5"/>
<rect x="1777.23" y="1130.7" width="13.12" height="114.3" fill="#5b9bd5"/>
<rect x="1791.54" y="1130.7" width="13.12" height="114.3" fill="#5b9bd5"/>
<rect x="1805.86" y="1015.0" width="13.12" height="230.0" fill="#9966cc"/>
<rect x="1820.18" y="1130.7" width="13.12" height="114.3" fill="#5b9bd5"/>
<rect x="1834.50" y="1130.7" width="13.12" height="114.3" fill="#5b9bd5"/>
<rect x="1848.81" y="1130.7" width="13.12" height="114.3" fill="#5b9bd5"/>
<rect x="1863.13" y="1130.7" width="13.12" height="114.3" fill="#5b9bd5"/>
<rect x="1877.45" y="1130.7" width="13.12" height="114.3" fill="#5b9bd5"/>
<rect x="1891.76" y="1015.0" width="13.12" height="230.0" fill="#9966cc"/>
<rect x="1906.08" y="1130.7" width="13.12" height="114.3" fill="#5b9bd5"/>
<rect x="1920.40" y="1130.7" width="13.12" height="114.3" fill="#5b9bd5"/>
<rect x="1934.71" y="1130.7" width="13.12" height="114.3" fill="#5b9bd5"/>
<rect x="1949.03" y="1015.0" width="13.12" height="230.0" fill="#9966cc"/>
<rect x="1963.35" y="1130.7" width="13.12" height="114.3" fill="#5b9bd5"/>
<rect x="1977.67" y="1130.7" width="13.12" height="114.3" fill="#5b9bd5"/>
<rect x="1991.98" y="1130.7" width="13.12" height="114.3" fill="#5b9bd5"/>
<rect x="2006.30" y="1130.7" width="13.12" height="114.3" fill="#5b9bd5"/>
<rect x="2020.62" y="1015.0" width="13.12" height="230.0" fill="#9966cc"/>
<rect x="2034.93" y="1130.7" width="13.12" height="114.3" fill="#5b9bd5"/>
<rect x="2049.25" y="1015.0" width="13.12" height="230.0" fill="#9966cc"/>
<rect x="2063.57" y="1130.7" width="13.12" height="114.3" fill="#5b9bd5"/>
<rect x="2077.88" y="1130.7" width="13.12" height="114.3" fill="#5b9bd5"/>
<rect x="2092.20" y="1015.0" width="13.12" height="230.0" fill="#9966cc"/>
<rect x="2106.52" y="1130.7" width="13.12" height="114.3" fill="#5b9bd5"/>
<rect x="2120.84" y="1130.7" width="13.12" height="114.3" fill="#5b9bd5"/>
<rect x="2135.15" y="1130.7" width="13.12" height="114.3" fill="#5b9bd5"/>
<rect x="2149.47" y="1015.0" width="13.12" height="230.0" fill="#9966cc"/>
<rect x="2163.79" y="1130.7" width="13.12" height="114.3" fill="#5b9bd5"/>
<rect x="2178.10" y="1130.7" width="13.12" height="114.3" fill="#5b9bd5"/>
<rect x="2192.42" y="1015.0" width="13.12" height="230.0" fill="#9966cc"/>
<rect x="2206.74" y="1130.7" width="13.12" height="114.3" fill="#5b9bd5"/>
<rect x="2221.05" y="1130.7" width="13.12" height="114.3" fill="#5b9bd5"/>
<rect x="2235.37" y="1130.7" width="13.12" height="114.3" fill="#5b9bd5"/>
<rect x="2249.69" y="1130.7" width="13.12" height="114.3" fill="#5b9bd5"/>
<rect x="2264.01" y="1015.0" width="13.12" height="230.0" fill="#9966cc"/>
<rect x="2278.32" y="1130.7" width="13.12" height="114.3" fill="#5b9bd5"/>
<rect x="573.5" y="861" width="1.2" height="384" fill="#444"/>
<rect x="2291.5" y="860" width="1.5" height="400" fill="#4a4a4a"/>
<rect x="573" y="1245" width="1720" height="2" fill="#444"/>
<rect x="573.25" y="1246" width="1.5" height="15" fill="#4a4a4a"/>
<rect x="601.88" y="1246" width="1.5" height="8" fill="#4a4a4a"/>
<rect x="630.52" y="1246" width="1.5" height="8" fill="#4a4a4a"/>
<rect x="659.15" y="1246" width="1.5" height="8" fill="#4a4a4a"/>
<rect x="687.79" y="1246" width="1.5" height="8" fill="#4a4a4a"/>
<rect x="716.42" y="1246" width="1.5" height="15" fill="#4a4a4a"/>
<rect x="745.05" y="1246" width="1.5" height="8" fill="#4a4a4a"/>
<rect x="773.69" y="1246" width="1.5" height="8" fill="#4a4a4a"/>
<rect x="802.32" y="1246" width="1.5" height="8" fill="#4a4a4a"/>
<rect x="830.96" y="1246" width="1.5" height="8" fill="#4a4a4a"/>
<rect x="859.59" y="1246" width="1.5" height="15" fill="#4a4a4a"/>
<rect x="888.22" y="1246" width="1.5" height="8" fill="#4a4a4a"/>
<rect x="916.86" y="1246" width="1.5" height="8" fill="#4a4a4a"/>
<rect x="945.49" y="1246" width="1.5" height="8" fill="#4a4a4a"/>
<rect x="974.13" y="1246" width="1.5" height="8" fill="#4a4a4a"/>
<rect x="1002.76" y="1246" width="1.5" height="15" fill="#4a4a4a"/>
<rect x="1031.39" y="1246" width="1.5" height="8" fill="#4a4a4a"/>
<rect x="1060.03" y="1246" width="1.5" height="8" fill="#4a4a4a"/>
<rect x="1088.66" y="1246" width="1.5" height="8" fill="#4a4a4a"/>
<rect x="1117.30" y="1246" width="1.5" height="8" fill="#4a4a4a"/>
<rect x="1145.93" y="1246" width="1.5" height="15" fill="#4a4a4a"/>
<rect x="1174.56" y="1246" width="1.5" height="8" fill="#4a4a4a"/>
<rect x="1203.20" y="1246" width="1.5" height="8" fill="#4a4a4a"/>
<rect x="1231.83" y="1246" width="1.5" height="8" fill="#4a4a4a"/>
<rect x="1260.47" y="1246" width="1.5" height="8" fill="#4a4a4a"/>
<rect x="1289.10" y="1246" width="1.5" height="15" fill="#4a4a4a"/>
<rect x="1317.73" y="1246" width="1.5" height="8" fill="#4a4a4a"/>
<rect x="1346.37" y="1246" width="1.5" height="8" fill="#4a4a4a"/>
<rect x="1375.00" y="1246" width="1.5" height="8" fill="#4a4a4a"/>
<rect x="1403.64" y="1246" width="1.5" height="8" fill="#4a4a4a"/>
<rect x="1432.27" y="1246" width="1.5" height="15" fill="#4a4a4a"/>
<rect x="1460.90" y="1246" width="1.5" height="8" fill="#4a4a4a"/>
<rect x="1489.54" y="1246" width="1.5" height="8" fill="#4a4a4a"/>
<rect x="1518.17" y="1246" width="1.5" height="8" fill="#4a4a4a"/>
<rect x="1546.81" y="1246" width="1.5" height="8" fill="#4a4a4a"/>
<rect x="1575.44" y="1246" width="1.5" height="15" fill="#4a4a4a"/>
<rect x="1604.07" y="1246" width="1.5" height="8" fill="#4a4a4a"/>
<rect x="1632.71" y="1246" width="1.5" height="8" fill="#4a4a4a"/>
<rect x="1661.34" y="1246" width="1.5" height="8" fill="#4a4a4a"/>
<rect x="1689.98" y="1246" width="1.5" height="8" fill="#4a4a4a"/>
<rect x="1718.61" y="1246" width="1.5" height="15" fill="#4a4a4a"/>
<rect x="1747.24" y="1246" width="1.5" height="8" fill="#4a4a4a"/>
<rect x="1775.88" y="1246" width="1.5" height="8" fill="#4a4a4a"/>
<rect x="1804.51" y="1246" width="1.5" height="8" fill="#4a4a4a"/>
<rect x="1833.15" y="1246" width="1.5" height="8" fill="#4a4a4a"/>
<rect x="1861.78" y="1246" width="1.5" height="15" fill="#4a4a4a"/>
<rect x="1890.41" y="1246" width="1.5" height="8" fill="#4a4a4a"/>
<rect x="1919.05" y="1246" width="1.5" height="8" fill="#4a4a4a"/>
<rect x="1947.68" y="1246" width="1.5" height="8" fill="#4a4a4a"/>
<rect x="1976.32" y="1246" width="1.5" height="8" fill="#4a4a4a"/>
<rect x="2004.95" y="1246" width="1.5" height="15" fill="#4a4a4a"/>
<rect x="2033.58" y="1246" width="1.5" height="8" fill="#4a4a4a"/>
<rect x="2062.22" y="1246" width="1.5" height="8" fill="#4a4a4a"/>
<rect x="2090.85" y="1246" width="1.5" height="8" fill="#4a4a4a"/>
<rect x="2119.49" y="1246" width="1.5" height="8" fill="#4a4a4a"/>
<rect x="2148.12" y="1246" width="1.5" height="15" fill="#4a4a4a"/>
<rect x="2176.75" y="1246" width="1.5" height="8" fill="#4a4a4a"/>
<rect x="2205.39" y="1246" width="1.5" height="8" fill="#4a4a4a"/>
<rect x="2234.02" y="1246" width="1.5" height="8" fill="#4a4a4a"/>
<rect x="2262.66" y="1246" width="1.5" height="8" fill="#4a4a4a"/>
<rect x="2291.29" y="1246" width="1.5" height="15" fill="#4a4a4a"/>
<rect x="566" y="1230.0" width="7.5" height="2.2" fill="#f0a028"/>
<rect x="566" y="1201.4" width="7.5" height="2.2" fill="#f0a028"/>
<rect x="560" y="1172.8" width="13.5" height="2.2" fill="#f0a028"/>
<rect x="566" y="1144.2" width="7.5" height="2.2" fill="#f0a028"/>
<rect x="566" y="1115.6" width="7.5" height="2.2" fill="#f0a028"/>
<rect x="566" y="1087.0" width="7.5" height="2.2" fill="#f0a028"/>
<rect x="560" y="1058.4" width="13.5" height="2.2" fill="#f0a028"/>
<rect x="566" y="1029.8" width="7.5" height="2.2" fill="#f0a028"/>
<rect x="566" y="1001.2" width="7.5" height="2.2" fill="#f0a028"/>
<rect x="566" y="972.6" width="7.5" height="2.2" fill="#f0a028"/>
<rect x="560" y="944.0" width="13.5" height="2.2" fill="#f0a028"/>
<rect x="566" y="915.4" width="7.5" height="2.2" fill="#f0a028"/>
<rect x="566" y="886.8" width="7.5" height="2.2" fill="#f0a028"/>
<rect x="2293" y="1228.0" width="14" height="2.2" fill="#4ade80"/>
<rect x="2293" y="1191.2" width="8" height="2.2" fill="#4ade80"/>
<rect x="2293" y="1154.4" width="8" height="2.2" fill="#4ade80"/>
<rect x="2293" y="1117.6" width="8" height="2.2" fill="#4ade80"/>
<rect x="2293" y="1080.8" width="8" height="2.2" fill="#4ade80"/>
<rect x="2293" y="1044.0" width="14" height="2.2" fill="#4ade80"/>
<rect x="2293" y="1007.2" width="8" height="2.2" fill="#4ade80"/>
<rect x="2293" y="970.4" width="8" height="2.2" fill="#4ade80"/>
<rect x="2293" y="933.6" width="8" height="2.2" fill="#4ade80"/>
<rect x="2293" y="896.8" width="8" height="2.2" fill="#4ade80"/>
<rect x="2293" y="860.0" width="14" height="2.2" fill="#4ade80"/>
<g clip-path="url(#p2)">
<polyline points="581.2,1006.0 595.5,1019.2 609.8,1031.0 624.1,1043.4 638.4,1054.1 652.7,1054.8 667.1,1065.5 681.4,1073.7 695.7,1080.9 710.0,1088.0 724.3,1092.3 738.6,1086.2 753.0,1092.3 767.3,1097.6 781.6,1101.9 795.9,1106.5 810.2,1222.3 824.5,1212.7 838.9,1212.7 853.2,1213.4 867.5,1211.6 881.8,1210.9 896.1,1210.9 910.5,1215.2 924.8,1202.7 939.1,1202.7 953.4,1202.7 967.7,1202.0 982.0,1200.9 996.4,1190.9 1010.7,1190.2 1025.0,1189.2 1039.3,1188.4 1053.6,1177.0 1067.9,1176.3 1082.3,1176.0 1096.6,1179.5 1110.9,1178.8 1125.2,1177.8 1139.5,1178.5 1153.8,1164.6 1168.2,1164.6 1182.5,1172.4 1196.8,1172.4 1211.1,1168.8 1225.4,1024.6 1239.7,1024.6 1254.1,1023.5 1268.4,1033.5 1282.7,1033.5 1297.0,1027.1 1311.3,1029.2 1325.6,1028.1 1340.0,1028.1 1354.3,1023.1 1368.6,1035.3 1382.9,1034.5 1397.2,1035.3 1411.5,1030.3 1425.9,1030.3 1440.2,1041.0 1454.5,1041.7 1468.8,1038.5 1483.1,911.3 1497.4,922.1 1511.8,922.8 1526.1,923.5 1540.4,924.6 1554.7,925.0 1569.0,925.7 1583.4,926.4 1597.7,929.3 1612.0,930.0 1626.3,931.1 1640.6,931.1 1654.9,934.7 1669.3,1079.5 1683.6,1072.3 1697.9,1074.1 1712.2,1074.1 1726.5,1074.5 1740.8,1074.1 1755.2,1074.9 1769.5,1075.6 1783.8,1076.3 1798.1,1083.2 1812.4,1075.2 1826.7,1077.0 1841.1,1070.9 1855.4,1077.7 1869.7,1078.8 1884.0,1074.5 1898.3,1075.2 1912.6,1078.8 1927.0,1207.8 1941.3,1202.4 1955.6,1202.4 1969.9,1203.2 1984.2,1196.7 1998.5,1196.7 2012.9,1196.7 2027.2,1196.7 2041.5,1207.8 2055.8,1198.8 2070.1,1198.8 2084.4,1200.3 2098.8,1193.1 2113.1,1194.1 2127.4,1201.4 2141.7,1201.4 2156.0,1200.3 2170.3,1200.3 2184.7,1207.8 2199.0,1207.8 2213.3,1197.0 2227.6,1196.7 2241.9,1195.9 2256.2,1203.2 2270.6,1203.2 2284.9,1207.8 2299.2,1202.4" fill="none" stroke="#f5a00b" stroke-width="4" stroke-linejoin="round"/>
<polyline points="581.2,1100.1 595.5,1105.4 609.8,1111.8 624.1,1117.2 638.4,1119.7 652.7,1120.0 667.1,1122.5 681.4,1124.3 695.7,1125.4 710.0,1126.5 724.3,1126.8 738.6,1125.4 753.0,1126.1 767.3,1126.8 781.6,1126.1 795.9,1126.8 810.2,1128.6 824.5,1129.7 838.9,1132.2 853.2,1133.9 867.5,1133.2 881.8,1133.2 896.1,1133.2 910.5,1133.2 924.8,1128.9 939.1,1125.4 953.4,1122.5 967.7,1119.0 982.0,1114.3 996.4,1109.4 1010.7,1102.9 1025.0,1095.8 1039.3,1091.2 1053.6,1083.3 1067.9,1076.9 1082.3,1071.6 1096.6,1067.3 1110.9,1062.7 1125.2,1057.7 1139.5,1054.1 1153.8,1047.0 1168.2,1043.4 1182.5,1040.6 1196.8,1038.1 1211.1,1033.5 1225.4,1024.6 1239.7,1017.4 1254.1,1011.4 1268.4,1008.5 1282.7,1005.0 1297.0,999.6 1311.3,997.1 1325.6,993.6 1340.0,991.8 1354.3,989.7 1368.6,991.1 1382.9,990.7 1397.2,991.4 1411.5,990.0 1425.9,991.1 1440.2,994.1 1454.5,995.9 1468.8,997.7 1483.1,995.9 1497.4,995.9 1511.8,996.7 1526.1,996.7 1540.4,994.9 1554.7,992.3 1569.0,989.8 1583.4,989.5 1597.7,990.5 1612.0,989.5 1626.3,989.8 1640.6,987.7 1654.9,990.5 1669.3,997.7 1683.6,1002.1 1697.9,1006.8 1712.2,1011.1 1726.5,1014.7 1740.8,1018.6 1755.2,1022.3 1769.5,1025.5 1783.8,1028.4 1798.1,1033.1 1812.4,1034.5 1826.7,1036.7 1841.1,1038.1 1855.4,1041.0 1869.7,1042.8 1884.0,1043.5 1898.3,1044.6 1912.6,1045.3 1927.0,1050.0 1941.3,1052.9 1955.6,1054.7 1969.9,1056.5 1984.2,1060.8 1998.5,1065.1 2012.9,1068.7 2027.2,1070.9 2041.5,1075.2 2055.8,1077.0 2070.1,1078.8 2084.4,1080.6 2098.8,1079.9 2113.1,1078.8 2127.4,1078.1 2141.7,1075.9 2156.0,1073.4 2170.3,1072.3 2184.7,1072.0 2199.0,1070.5 2213.3,1069.1 2227.6,1068.4 2241.9,1069.1 2256.2,1070.5 2270.6,1072.0 2284.9,1073.4 2299.2,1073.4" fill="none" stroke="#4ade80" stroke-width="4" stroke-linejoin="round"/>
</g>
<text x="0" y="0" transform="translate(520.5,1053.5) rotate(-90)" text-anchor="middle" font-size="19" fill="#f0a028">Mbps</text>
<text x="0" y="0" transform="translate(2363,1056.5) rotate(-90)" text-anchor="middle" font-size="17" fill="#4ade80">VMAF</text>
<circle cx="2294.2" cy="1421" r="8.2" fill="#4ade80"/>
<text x="56.5" y="39" font-family="Liberation Sans" font-size="23.46" font-weight="400" fill="#ffffff" letter-spacing="-0.35" style="white-space:pre">SLC Bitrate Explorer</text>
<text x="53.6" y="99.1" font-family="Liberation Sans" font-size="24.86" font-weight="400" fill="#989898" letter-spacing="0.231" style="white-space:pre">File Intelligence</text>
<text x="295.2" y="99.1" font-family="Liberation Sans" font-size="24.86" font-weight="400" fill="#989898" letter-spacing="0.093" style="white-space:pre">File Compare</text>
<text x="509.4" y="99.1" font-family="Liberation Sans" font-size="24.86" font-weight="400" fill="#989898" letter-spacing="0.48" style="white-space:pre">Bitrate Chart</text>
<text x="720.8" y="97.5" font-family="Liberation Sans" font-size="24.86" font-weight="400" fill="#e6e6e6" letter-spacing="0.322" style="white-space:pre">Frame Type</text>
<text x="919.0" y="99.1" font-family="Liberation Sans" font-size="24.86" font-weight="400" fill="#989898" letter-spacing="0.821" style="white-space:pre">Metrics</text>
<text x="1068.8" y="99.1" font-family="Liberation Sans" font-size="24.86" font-weight="400" fill="#989898" letter-spacing="0.284" style="white-space:pre">BD-Rate</text>
<text x="1228.6" y="99.1" font-family="Liberation Sans" font-size="24.86" font-weight="400" fill="#989898" letter-spacing="0.172" style="white-space:pre">Breakeven</text>
<text x="68.6" y="197.3" font-family="Liberation Sans" font-size="22.77" font-weight="400" fill="#dedede" letter-spacing="0.484" style="white-space:pre">+ Add</text>
<text x="172.3" y="197.3" font-family="Liberation Sans" font-size="22.77" font-weight="400" fill="#6e6e6e" letter-spacing="-0.071" style="white-space:pre">All</text>
<text x="240.2" y="197.3" font-family="Liberation Sans" font-size="22.77" font-weight="400" fill="#dedede" letter-spacing="0.246" style="white-space:pre">None</text>
<text x="337.5" y="197.3" font-family="Liberation Sans" font-size="22.77" font-weight="400" fill="#dedede" letter-spacing="-0.08" style="white-space:pre">Clear</text>
<text x="475.0" y="204.3" font-family="Liberation Sans" font-size="24.86" font-weight="400" fill="#dcdcdc" letter-spacing="0.198" style="white-space:pre">Frame Types</text>
<text x="713.0" y="203.5" font-family="Liberation Sans" font-size="23.74" font-weight="400" fill="#dcdcdc" letter-spacing="-1.811" style="white-space:pre">VMAF</text>
<text x="851.7" y="203.5" font-family="Liberation Sans" font-size="23.74" font-weight="400" fill="#dcdcdc" letter-spacing="-2.4" style="white-space:pre">PSNR</text>
<text x="987.6" y="203.5" font-family="Liberation Sans" font-size="23.74" font-weight="400" fill="#dcdcdc" letter-spacing="-1.118" style="white-space:pre">SSIM</text>
<text x="1081.5" y="203.2" font-family="Liberation Sans" font-size="23.46" font-weight="400" fill="#dedede" letter-spacing="-0.688" style="white-space:pre">Reset</text>
<text x="1182.5" y="203.2" font-family="Liberation Sans" font-size="23.46" font-weight="400" fill="#dedede" letter-spacing="-0.436" style="white-space:pre">Zoom Out</text>
<text x="1325.8" y="203.2" font-family="Liberation Sans" font-size="23.46" font-weight="400" fill="#dedede" letter-spacing="-0.285" style="white-space:pre">Frame Viewer</text>
<text x="1741.6" y="203.0" font-family="Liberation Sans" font-size="21.93" font-weight="400" fill="#dcdcdc" style="white-space:pre">I</text>
<text x="1800.7" y="203.0" font-family="Liberation Sans" font-size="21.93" font-weight="400" fill="#dcdcdc" style="white-space:pre">P</text>
<text x="1866.7" y="203.0" font-family="Liberation Sans" font-size="21.93" font-weight="400" fill="#dcdcdc" style="white-space:pre">B</text>
<text x="2044.6" y="202.7" font-family="Liberation Sans" font-size="21.79" font-weight="400" fill="#f5a623" letter-spacing="0.697" style="white-space:pre">Avg Bitrate</text>
<text x="2280.5" y="202.7" font-family="Liberation Sans" font-size="21.79" font-weight="400" fill="#4ade80" letter-spacing="0.287" style="white-space:pre">Avg VMAF</text>
<text x="508.5" y="280.8" font-family="Liberation Sans" font-size="21.51" font-weight="400" fill="#e4e4e4" stroke="#e4e4e4" stroke-width="0.55" letter-spacing="1.178" style="white-space:pre">football_x264_1080p_veryslow_cvbr2x_4m.mp4</text>
<text x="1054.5" y="279.9" font-family="Liberation Sans" font-size="20.11" font-weight="400" fill="#8c8c8c" letter-spacing="0.512" style="white-space:pre">Bitrate:</text>
<text x="1129.0" y="279.9" font-family="Liberation Sans" font-size="20.11" font-weight="400" fill="#f5a623" letter-spacing="-0.037" style="white-space:pre">4.1 Mbps</text>
<text x="1236.9" y="279.9" font-family="Liberation Sans" font-size="20.11" font-weight="400" fill="#8c8c8c" letter-spacing="-0.04" style="white-space:pre">VMAF:</text>
<text x="1306.7" y="279.9" font-family="Liberation Sans" font-size="20.11" font-weight="400" fill="#4ade80" letter-spacing="0.548" style="white-space:pre">92.6</text>
<text x="2132.5" y="279.8" font-family="Liberation Sans" font-size="19.97" font-weight="400" fill="#8c8c8c" letter-spacing="-0.844" style="white-space:pre">I:</text>
<text x="2147.4" y="279.8" font-family="Liberation Sans" font-size="19.97" font-weight="400" fill="#ffffff" letter-spacing="-1.446" style="white-space:pre">1.8%</text>
<text x="2208.4" y="279.8" font-family="Liberation Sans" font-size="19.97" font-weight="400" fill="#8c8c8c" letter-spacing="-0.809" style="white-space:pre">P:</text>
<text x="2233.0" y="279.8" font-family="Liberation Sans" font-size="19.97" font-weight="400" fill="#a66bd9" letter-spacing="-1.334" style="white-space:pre">30.1%</text>
<text x="2304.5" y="279.8" font-family="Liberation Sans" font-size="19.97" font-weight="400" fill="#8c8c8c" letter-spacing="-0.609" style="white-space:pre">B:</text>
<text x="2327.0" y="279.8" font-family="Liberation Sans" font-size="19.97" font-weight="400" fill="#5b9fe0" letter-spacing="-1.034" style="white-space:pre">68.1%</text>
<text x="508.5" y="812.0" font-family="Liberation Sans" font-size="21.51" font-weight="400" fill="#e4e4e4" stroke="#e4e4e4" stroke-width="0.55" letter-spacing="1.136" style="white-space:pre">football_x264_1080p_veryslow_cbr_4m.mp4</text>
<text x="1016.1" y="811.1" font-family="Liberation Sans" font-size="20.11" font-weight="400" fill="#8c8c8c" letter-spacing="0.74" style="white-space:pre">Bitrate:</text>
<text x="1091.4" y="811.1" font-family="Liberation Sans" font-size="20.11" font-weight="400" fill="#f5a623" letter-spacing="0.62" style="white-space:pre">3.8 Mbps</text>
<text x="1204.5" y="811.1" font-family="Liberation Sans" font-size="20.11" font-weight="400" fill="#8c8c8c" letter-spacing="0.135" style="white-space:pre">VMAF:</text>
<text x="1274.4" y="811.1" font-family="Liberation Sans" font-size="20.11" font-weight="400" fill="#4ade80" letter-spacing="0.648" style="white-space:pre">90.9</text>
<text x="2132.5" y="811.0" font-family="Liberation Sans" font-size="19.97" font-weight="400" fill="#8c8c8c" letter-spacing="-0.844" style="white-space:pre">I:</text>
<text x="2147.4" y="811.0" font-family="Liberation Sans" font-size="19.97" font-weight="400" fill="#ffffff" letter-spacing="-1.446" style="white-space:pre">1.8%</text>
<text x="2208.4" y="811.0" font-family="Liberation Sans" font-size="19.97" font-weight="400" fill="#8c8c8c" letter-spacing="-0.809" style="white-space:pre">P:</text>
<text x="2233.0" y="811.0" font-family="Liberation Sans" font-size="19.97" font-weight="400" fill="#a66bd9" letter-spacing="-1.334" style="white-space:pre">30.1%</text>
<text x="2304.5" y="811.0" font-family="Liberation Sans" font-size="19.97" font-weight="400" fill="#8c8c8c" letter-spacing="-0.609" style="white-space:pre">B:</text>
<text x="2327.0" y="811.0" font-family="Liberation Sans" font-size="19.97" font-weight="400" fill="#5b9fe0" letter-spacing="-1.034" style="white-space:pre">68.1%</text>
<text x="476.2" y="1342.5" font-family="Liberation Sans" font-size="21.65" font-weight="400" fill="#8c8c8c" letter-spacing="0.455" style="white-space:pre">Frame:</text>
<text x="615.2" y="1342.5" font-family="Liberation Sans" font-size="21.65" font-weight="400" fill="#8c8c8c" letter-spacing="0.754" style="white-space:pre">Time:</text>
<text x="2095.5" y="1342.5" font-family="Liberation Sans" font-size="21.65" font-weight="400" fill="#8c8c8c" letter-spacing="0.45" style="white-space:pre">View Range:</text>
<text x="555.0" y="1342.5" font-family="Liberation Mono" font-size="20" font-weight="400" fill="#d8d8d8" stroke="#d8d8d8" stroke-width="0.45" letter-spacing="1.698" style="white-space:pre">--</text>
<text x="679.3" y="1342.5" font-family="Liberation Mono" font-size="20" font-weight="400" fill="#d8d8d8" stroke="#d8d8d8" stroke-width="0.45" letter-spacing="0.341" style="white-space:pre">--:--:--</text>
<text x="2232.3" y="1342.5" font-family="Liberation Mono" font-size="20" font-weight="400" fill="#e0e0e0" stroke="#e0e0e0" stroke-width="0.45" letter-spacing="0.106" style="white-space:pre">Frame 0 - 120</text>
<text x="23.1" y="1430.6" font-family="Liberation Sans" font-size="28.77" font-weight="400" fill="#8e8e8e" letter-spacing="1.015" style="white-space:pre">ffprobe: N-119389-gd9bd8e9eb1-20250429</text>
<text x="2126.7" y="1427.9" font-family="Liberation Sans" font-size="22.21" font-weight="400" fill="#c4c4c4" letter-spacing="0.27" style="white-space:pre">Pro License</text>
<text x="2335.8" y="1431.0" font-family="Liberation Sans" font-size="27.93" font-weight="400" fill="#9a9a9a" letter-spacing="0.187" style="white-space:pre">Ready</text>
<text x="136.8" y="266.9" font-family="Liberation Sans" font-size="23.0" font-weight="400" fill="#e0e0e0" letter-spacing="0.95" style="white-space:pre">football_x264_1080</text>
<text x="135.8" y="295.9" font-family="Liberation Sans" font-size="23.0" font-weight="400" fill="#e0e0e0" letter-spacing="0.95" style="white-space:pre">p_veryslow_cvbr2x_</text>
<text x="136.8" y="324.9" font-family="Liberation Sans" font-size="23.0" font-weight="400" fill="#e0e0e0" letter-spacing="0.95" style="white-space:pre">4m.mp4</text>
<text x="136.8" y="389.09999999999997" font-family="Liberation Sans" font-size="23.0" font-weight="400" fill="#e0e0e0" letter-spacing="0.95" style="white-space:pre">football_x264_1080</text>
<text x="135.8" y="418.09999999999997" font-family="Liberation Sans" font-size="23.0" font-weight="400" fill="#e0e0e0" letter-spacing="0.95" style="white-space:pre">p_veryslow_cbr_4m</text>
<text x="134.8" y="447.09999999999997" font-family="Liberation Sans" font-size="23.0" font-weight="400" fill="#e0e0e0" letter-spacing="0.95" style="white-space:pre">.mp4</text>
<text x="136.8" y="511.29999999999995" font-family="Liberation Sans" font-size="23.0" font-weight="400" fill="#e0e0e0" letter-spacing="0.95" style="white-space:pre">football_x264_720p</text>
<text x="137.8" y="540.3" font-family="Liberation Sans" font-size="23.0" font-weight="400" fill="#e0e0e0" letter-spacing="0.95" style="white-space:pre">_veryslow_cvbr2x_</text>
<text x="135.8" y="569.3" font-family="Liberation Sans" font-size="23.0" font-weight="400" fill="#e0e0e0" letter-spacing="0.95" style="white-space:pre">2m.mp4</text>
<text x="136.8" y="633.5" font-family="Liberation Sans" font-size="23.0" font-weight="400" fill="#e0e0e0" letter-spacing="0.95" style="white-space:pre">football_x264_720p</text>
<text x="137.8" y="662.5" font-family="Liberation Sans" font-size="23.0" font-weight="400" fill="#e0e0e0" letter-spacing="0.95" style="white-space:pre">_veryslow_cbr_2m.</text>
<text x="135.8" y="691.5" font-family="Liberation Sans" font-size="23.0" font-weight="400" fill="#e0e0e0" letter-spacing="0.95" style="white-space:pre">mp4</text>
<text x="136.8" y="755.7" font-family="Liberation Sans" font-size="23.0" font-weight="400" fill="#e0e0e0" letter-spacing="0.95" style="white-space:pre">football_x264_540</text>
<text x="135.8" y="784.7" font-family="Liberation Sans" font-size="23.0" font-weight="400" fill="#e0e0e0" letter-spacing="0.95" style="white-space:pre">p_veryslow_cvbr2x_</text>
<text x="135.8" y="813.7" font-family="Liberation Sans" font-size="23.0" font-weight="400" fill="#e0e0e0" letter-spacing="0.95" style="white-space:pre">1m.mp4</text>
<text x="136.8" y="877.9" font-family="Liberation Sans" font-size="23.0" font-weight="400" fill="#e0e0e0" letter-spacing="0.95" style="white-space:pre">football_x264_540</text>
<text x="135.8" y="906.9" font-family="Liberation Sans" font-size="23.0" font-weight="400" fill="#e0e0e0" letter-spacing="0.95" style="white-space:pre">p_veryslow_cbr_1m.</text>
<text x="135.8" y="935.9" font-family="Liberation Sans" font-size="23.0" font-weight="400" fill="#e0e0e0" letter-spacing="0.95" style="white-space:pre">mp4</text>
<text x="136.8" y="1000.1" font-family="Liberation Sans" font-size="23.0" font-weight="400" fill="#e0e0e0" letter-spacing="0.95" style="white-space:pre">football_x264_480</text>
<text x="135.8" y="1029.1" font-family="Liberation Sans" font-size="23.0" font-weight="400" fill="#e0e0e0" letter-spacing="0.95" style="white-space:pre">p_veryslow_cvbr2x_</text>
<text x="136.8" y="1058.1" font-family="Liberation Sans" font-size="23.0" font-weight="400" fill="#e0e0e0" letter-spacing="0.95" style="white-space:pre">500k.mp4</text>
<text x="136.8" y="1122.3" font-family="Liberation Sans" font-size="23.0" font-weight="400" fill="#e0e0e0" letter-spacing="0.95" style="white-space:pre">football_x264_480</text>
<text x="135.8" y="1151.3" font-family="Liberation Sans" font-size="23.0" font-weight="400" fill="#e0e0e0" letter-spacing="0.95" style="white-space:pre">p_veryslow_cbr_50</text>
<text x="136.8" y="1180.3" font-family="Liberation Sans" font-size="23.0" font-weight="400" fill="#e0e0e0" letter-spacing="0.95" style="white-space:pre">0k.mp4</text>
<text x="574.0" y="759" font-family="Liberation Sans" font-size="19" font-weight="400" fill="#ffffff" text-anchor="middle" style="white-space:pre">0</text>
<text x="717.1700000000001" y="759" font-family="Liberation Sans" font-size="19" font-weight="400" fill="#ffffff" text-anchor="middle" style="white-space:pre">10</text>
<text x="860.34" y="759" font-family="Liberation Sans" font-size="19" font-weight="400" fill="#ffffff" text-anchor="middle" style="white-space:pre">20</text>
<text x="1003.51" y="759" font-family="Liberation Sans" font-size="19" font-weight="400" fill="#ffffff" text-anchor="middle" style="white-space:pre">30</text>
<text x="1146.68" y="759" font-family="Liberation Sans" font-size="19" font-weight="400" fill="#ffffff" text-anchor="middle" style="white-space:pre">40</text>
<text x="1289.85" y="759" font-family="Liberation Sans" font-size="19" font-weight="400" fill="#ffffff" text-anchor="middle" style="white-space:pre">50</text>
<text x="1433.02" y="759" font-family="Liberation Sans" font-size="19" font-weight="400" fill="#ffffff" text-anchor="middle" style="white-space:pre">60</text>
<text x="1576.19" y="759" font-family="Liberation Sans" font-size="19" font-weight="400" fill="#ffffff" text-anchor="middle" style="white-space:pre">70</text>
<text x="1719.3600000000001" y="759" font-family="Liberation Sans" font-size="19" font-weight="400" fill="#ffffff" text-anchor="middle" style="white-space:pre">80</text>
<text x="1862.53" y="759" font-family="Liberation Sans" font-size="19" font-weight="400" fill="#ffffff" text-anchor="middle" style="white-space:pre">90</text>
<text x="2005.7" y="759" font-family="Liberation Sans" font-size="19" font-weight="400" fill="#ffffff" text-anchor="middle" style="white-space:pre">100</text>
<text x="2148.87" y="759" font-family="Liberation Sans" font-size="19" font-weight="400" fill="#ffffff" text-anchor="middle" style="white-space:pre">110</text>
<text x="2292.04" y="759" font-family="Liberation Sans" font-size="19" font-weight="400" fill="#ffffff" text-anchor="middle" style="white-space:pre">120</text>
<text x="574.0" y="1290" font-family="Liberation Sans" font-size="19" font-weight="400" fill="#ffffff" text-anchor="middle" style="white-space:pre">0</text>
<text x="717.1700000000001" y="1290" font-family="Liberation Sans" font-size="19" font-weight="400" fill="#ffffff" text-anchor="middle" style="white-space:pre">10</text>
<text x="860.34" y="1290" font-family="Liberation Sans" font-size="19" font-weight="400" fill="#ffffff" text-anchor="middle" style="white-space:pre">20</text>
<text x="1003.51" y="1290" font-family="Liberation Sans" font-size="19" font-weight="400" fill="#ffffff" text-anchor="middle" style="white-space:pre">30</text>
<text x="1146.68" y="1290" font-family="Liberation Sans" font-size="19" font-weight="400" fill="#ffffff" text-anchor="middle" style="white-space:pre">40</text>
<text x="1289.85" y="1290" font-family="Liberation Sans" font-size="19" font-weight="400" fill="#ffffff" text-anchor="middle" style="white-space:pre">50</text>
<text x="1433.02" y="1290" font-family="Liberation Sans" font-size="19" font-weight="400" fill="#ffffff" text-anchor="middle" style="white-space:pre">60</text>
<text x="1576.19" y="1290" font-family="Liberation Sans" font-size="19" font-weight="400" fill="#ffffff" text-anchor="middle" style="white-space:pre">70</text>
<text x="1719.3600000000001" y="1290" font-family="Liberation Sans" font-size="19" font-weight="400" fill="#ffffff" text-anchor="middle" style="white-space:pre">80</text>
<text x="1862.53" y="1290" font-family="Liberation Sans" font-size="19" font-weight="400" fill="#ffffff" text-anchor="middle" style="white-space:pre">90</text>
<text x="2005.7" y="1290" font-family="Liberation Sans" font-size="19" font-weight="400" fill="#ffffff" text-anchor="middle" style="white-space:pre">100</text>
<text x="2148.87" y="1290" font-family="Liberation Sans" font-size="19" font-weight="400" fill="#ffffff" text-anchor="middle" style="white-space:pre">110</text>
<text x="2292.04" y="1290" font-family="Liberation Sans" font-size="19" font-weight="400" fill="#ffffff" text-anchor="middle" style="white-space:pre">120</text>
<text x="551" y="647.5" font-size="18" fill="#f0a028" text-anchor="end">2.0</text>
<text x="551" y="562.2" font-size="18" fill="#f0a028" text-anchor="end">4.0</text>
<text x="551" y="476.8" font-size="18" fill="#f0a028" text-anchor="end">6.0</text>
<text x="551" y="391.5" font-size="18" fill="#f0a028" text-anchor="end">8.0</text>
<text x="2314.7" y="684.0" font-size="18" fill="#4ade80" text-anchor="start">80</text>
<text x="2314.7" y="510.2" font-size="18" fill="#4ade80" text-anchor="start">90</text>
<text x="2314.7" y="336.5" font-size="18" fill="#4ade80" text-anchor="start">100</text>
<text x="551" y="1180.3" font-size="18" fill="#f0a028" text-anchor="end">2.0</text>
<text x="551" y="1065.9" font-size="18" fill="#f0a028" text-anchor="end">4.0</text>
<text x="551" y="951.5" font-size="18" fill="#f0a028" text-anchor="end">6.0</text>
<text x="2314.7" y="1235.5" font-size="18" fill="#4ade80" text-anchor="start">80</text>
<text x="2314.7" y="1051.5" font-size="18" fill="#4ade80" text-anchor="start">90</text>
<text x="2314.7" y="867.5" font-size="18" fill="#4ade80" text-anchor="start">100</text>
</svg></body></html>
